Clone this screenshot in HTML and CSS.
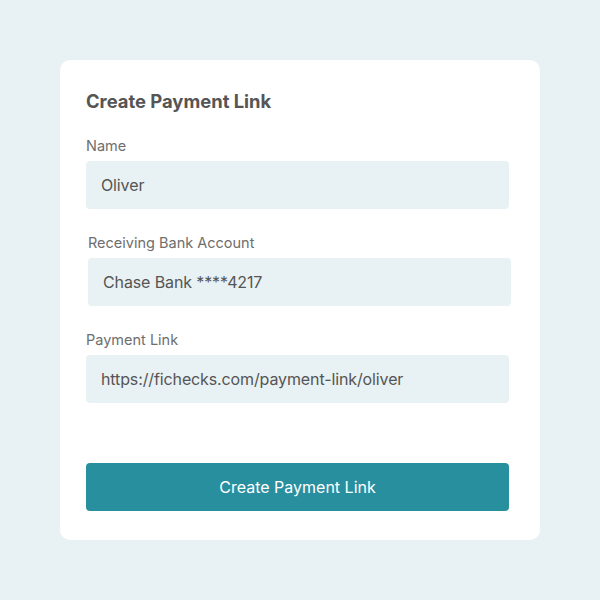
FILE: index.html
```html
<!DOCTYPE html>
<html>
<head>
<meta charset="utf-8">
<link rel="stylesheet" href="styles.css">
</head>
<body>
<div class="page">
  <div class="card">
    <h1 class="title">Create Payment Link</h1>
    <div class="field">
      <div class="label">Name</div>
      <div class="input">Oliver</div>
    </div>
    <div class="field field--shift">
      <div class="label">Receiving Bank Account</div>
      <div class="input">Chase Bank ****4217</div>
    </div>
    <div class="field">
      <div class="label">Payment Link</div>
      <div class="input">https://fichecks.com/payment-link/oliver</div>
    </div>
    <button class="btn">Create Payment Link</button>
  </div>
</div>
</body>
</html>
```
FILE: styles.css
```css
* { box-sizing: border-box; }
html, body { margin: 0; padding: 0; }
body {
  background: #e8f1f3;
  font-family: Inter, "Noto Sans", sans-serif;
  width: 600px;
  height: 600px;
}
.page {
  padding: 60px;
}
.card {
  background: #ffffff;
  border-radius: 10px;
  width: 480px;
  height: 480px;
  padding: 30px 31px 0 26px;
  display: flex;
  flex-direction: column;
}
.title {
  margin: 0 0 25px 0;
  font-size: 18.4px;
  line-height: 22px;
  font-weight: 700;
  color: #555555;
}
.field {
  display: flex;
  flex-direction: column;
  gap: 7px;
  margin-bottom: 25px;
}
.field--shift {
  margin-left: 2px;
  margin-right: -2px;
}
.label {
  font-size: 14.5px;
  line-height: 17px;
  color: #6e6e6e;
}
.input {
  height: 48px;
  background: #e8f1f3;
  border-radius: 4px;
  padding: 0 15px;
  display: flex;
  align-items: center;
  font-size: 16px;
  letter-spacing: -0.12px;
  color: #555555;
}
.btn {
  margin-top: 35px;
  height: 48px;
  border: none;
  border-radius: 4px;
  background: #288f9f;
  color: #ffffff;
  font-family: Inter, "Noto Sans", sans-serif;
  font-size: 16px;
  width: 100%;
}
```
